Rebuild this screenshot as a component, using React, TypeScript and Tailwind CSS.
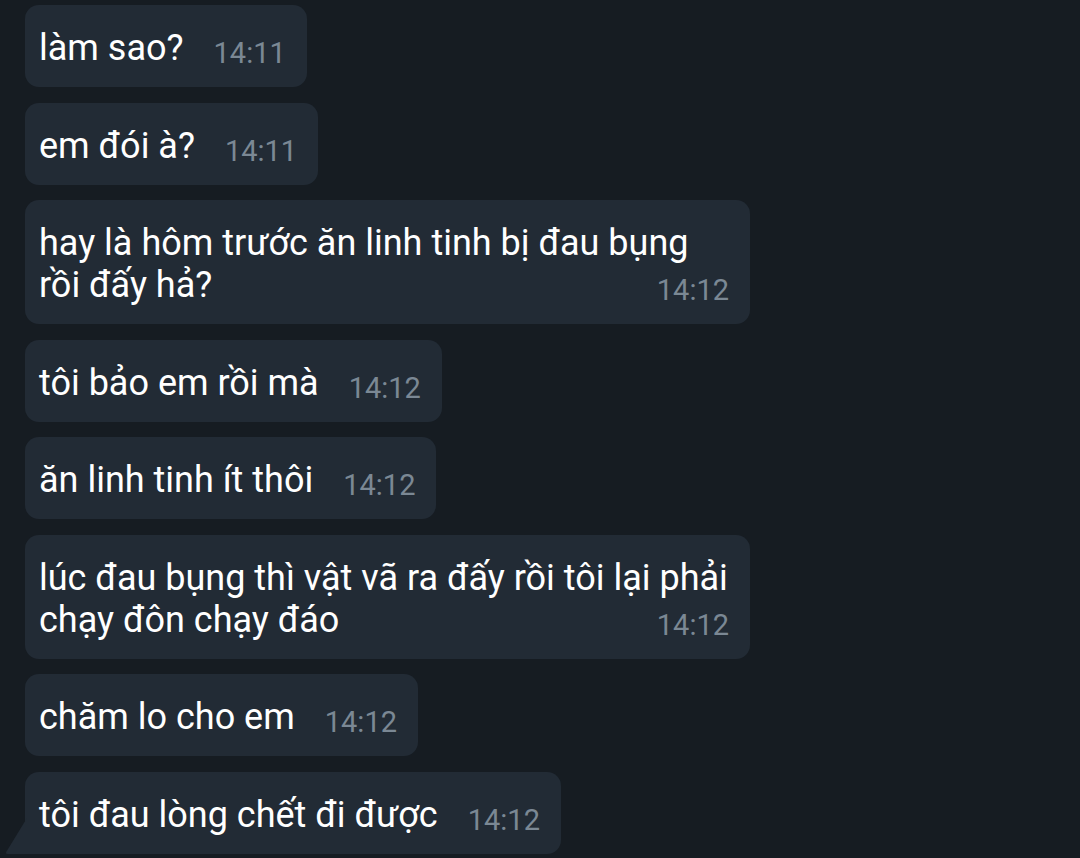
import React from 'react';

type Message = {
  lines: string[];
  time: string;
  wide?: boolean;
  tail?: boolean;
};

const messages: Message[] = [
  { lines: ['làm sao?'], time: '14:11' },
  { lines: ['em đói à?'], time: '14:11' },
  { lines: ['hay là hôm trước ăn linh tinh bị đau bụng', 'rồi đấy hả?'], time: '14:12', wide: true },
  { lines: ['tôi bảo em rồi mà'], time: '14:12' },
  { lines: ['ăn linh tinh ít thôi'], time: '14:12' },
  { lines: ['lúc đau bụng thì vật vã ra đấy rồi tôi lại phải', 'chạy đôn chạy đáo'], time: '14:12', wide: true },
  { lines: ['chăm lo cho em'], time: '14:12' },
  { lines: ['tôi đau lòng chết đi được'], time: '14:12', tail: true },
];

const Time: React.FC<{ value: string }> = ({ value }) => (
  <span className="text-[29px] leading-none text-[#7b8894] mb-[1px] shrink-0">{value}</span>
);

const Bubble: React.FC<{ msg: Message }> = ({ msg }) => {
  const last = msg.lines[msg.lines.length - 1];
  return (
    <div className="relative self-start">
      {msg.tail && (
        <svg className="absolute left-[-20px] bottom-0" width="22" height="36" viewBox="0 0 22 36">
          <path d="M22 0 L22 36 L3 36 Q0 36 1.5 33.5 Z" fill="#222b35" />
        </svg>
      )}
      <div
        className={`bg-[#222b35] pt-[22px] pb-[18px] pl-[14px] pr-[21px] text-white text-[36px] leading-[42px] ${
          msg.tail ? 'rounded-[14px] rounded-bl-none' : 'rounded-[14px]'
        } ${msg.wide ? 'w-[725px]' : ''}`}
      >
        {msg.lines.slice(0, -1).map((l) => (
          <div key={l}>{l}</div>
        ))}
        <div className={`flex items-end ${msg.wide ? 'justify-between' : 'gap-[30px]'}`}>
          <span>{last}</span>
          <Time value={msg.time} />
        </div>
      </div>
    </div>
  );
};

export default function App() {
  return (
    <div
      className="w-[1080px] h-[858px] overflow-hidden bg-[#161c22] flex flex-col gap-[15.5px] pl-[25px] pt-[5px]"
      style={{ fontFamily: 'Roboto, "Noto Sans", sans-serif' }}
    >
      {messages.map((m, i) => (
        <Bubble key={i} msg={m} />
      ))}
    </div>
  );
}
